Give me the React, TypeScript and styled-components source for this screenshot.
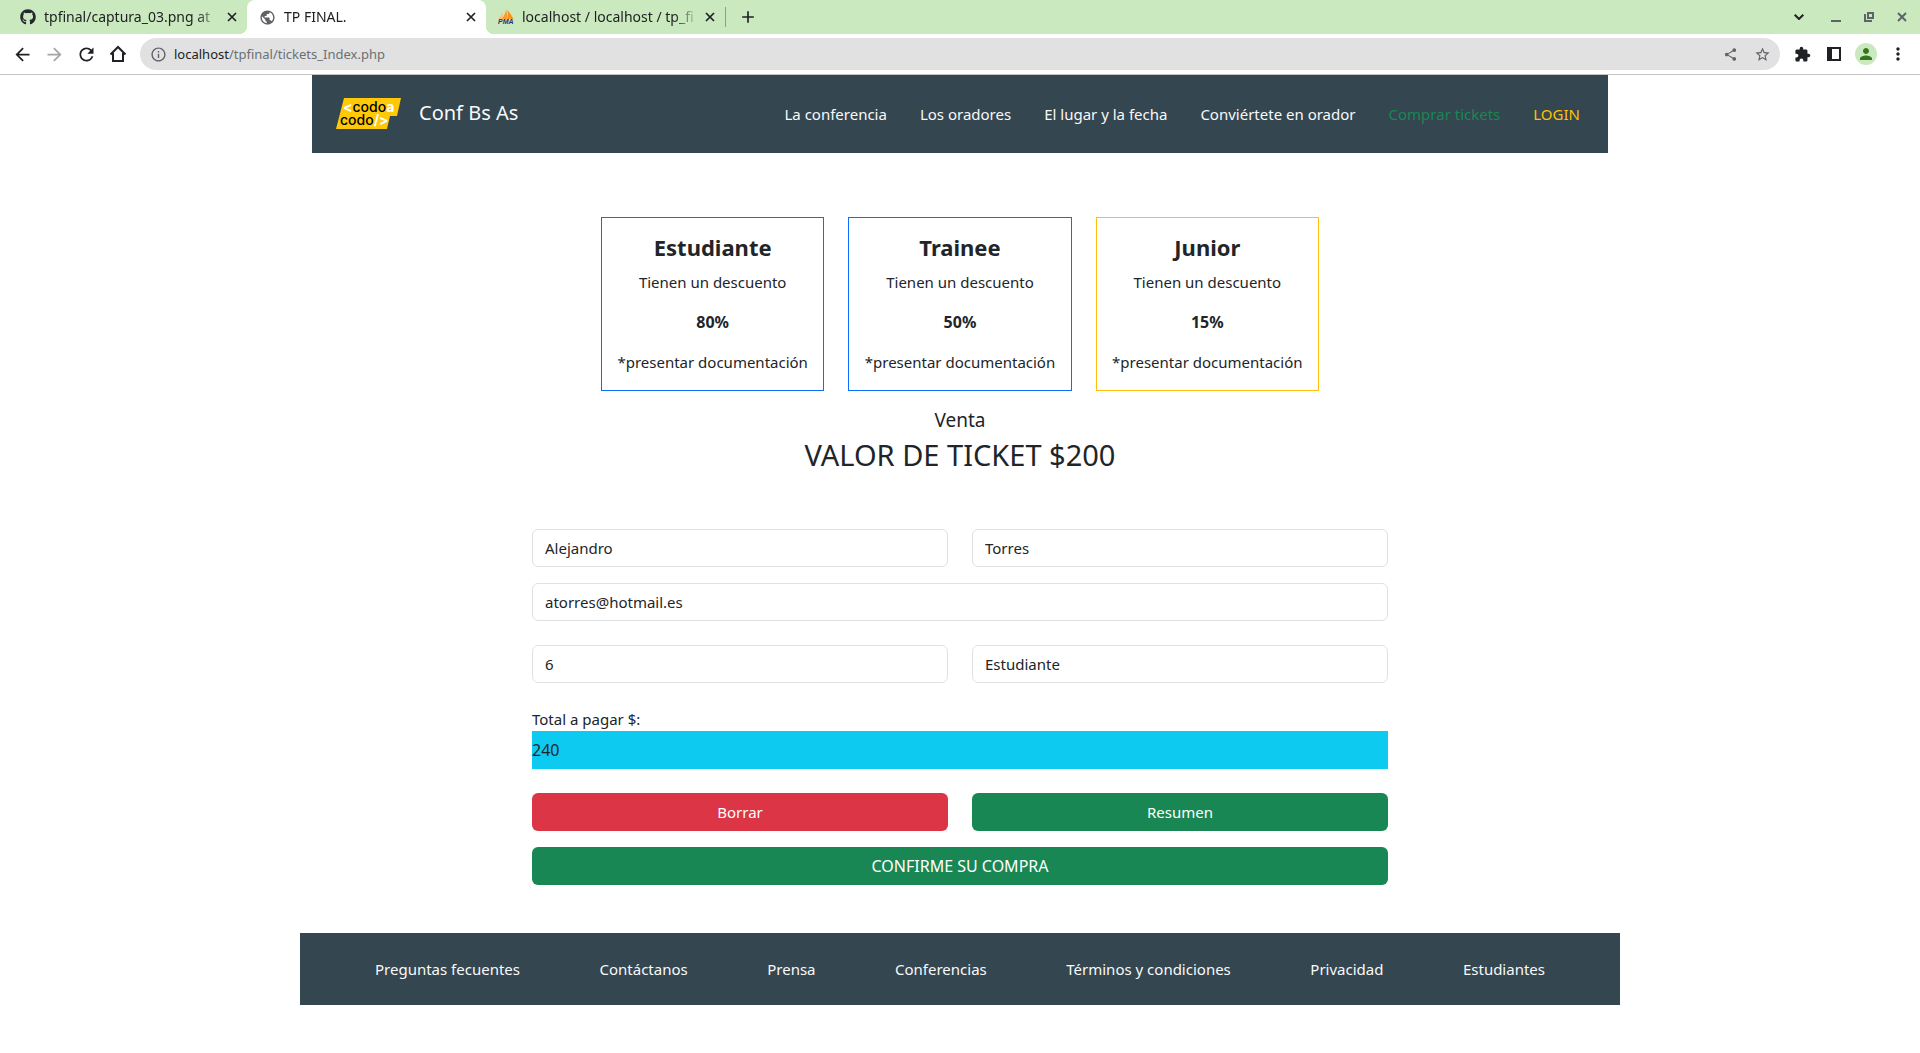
import React from "react";
import styled, { createGlobalStyle, css } from "styled-components";
import {
  MdArrowBack,
  MdArrowForward,
  MdRefresh,
  MdInfoOutline,
  MdShare,
  MdStarBorder,
  MdExtension,
  MdMoreVert,
  MdPublic,
  MdPerson,
  MdAdd,
} from "react-icons/md";
import { FaGithub } from "react-icons/fa";

const GlobalStyle = createGlobalStyle`
  *, *::before, *::after { box-sizing: border-box; }
  body {
    margin: 0;
    background: #fff;
    color: #212529;
    font: 400 15px/24px "Noto Sans", "Open Sans", sans-serif;
  }
  h1, h2, h3, p, ul { margin: 0; padding: 0; }
  ul { list-style: none; }
  button, input, select { font: inherit; color: inherit; margin: 0; }
  svg { display: block; flex: none; }
`;

/* ---------- Browser window ---------- */

const TabStrip = styled.div`
  display: flex;
  align-items: center;
  height: 34px;
  padding: 0 2px 0 8px;
  background: #cbe9bf;
`;

const Tab = styled.div<{ $active?: boolean }>`
  position: relative;
  display: flex;
  align-items: center;
  gap: 8px;
  width: 239px;
  height: 34px;
  padding: 0 7px 0 12px;
  font-size: 14px;
  line-height: 20px;
  color: #202124;
  ${(p) =>
    p.$active &&
    css`
      background: #fff;
      border-radius: 8px 8px 0 0;
      &::before,
      &::after {
        content: "";
        position: absolute;
        bottom: 0;
        width: 8px;
        height: 8px;
      }
      &::before {
        right: 100%;
        background: radial-gradient(circle at 0 0, transparent 8px, #fff 8px);
      }
      &::after {
        left: 100%;
        background: radial-gradient(circle at 100% 0, transparent 8px, #fff 8px);
      }
    `}
`;

const TabTitle = styled.span`
  flex: 1;
  min-width: 0;
  overflow: hidden;
  white-space: nowrap;
  mask-image: linear-gradient(to right, #000 calc(100% - 20px), rgba(0, 0, 0, 0.2));
`;

const PlainButton = styled.button`
  display: flex;
  align-items: center;
  justify-content: center;
  padding: 0;
  border: 0;
  background: none;
  cursor: pointer;
`;

const TabClose = styled(PlainButton)`
  width: 16px;
  height: 16px;
  color: #202124;
`;

const StripDivider = styled.span`
  width: 1px;
  height: 20px;
  background: #8ba383;
`;

const NewTab = styled(PlainButton)`
  width: 28px;
  height: 28px;
  margin-left: 8px;
  color: #202124;
`;

const WindowControls = styled.div`
  display: flex;
  margin-left: auto;
`;

const WindowButton = styled(PlainButton)<{ $dark?: boolean }>`
  width: ${(p) => (p.$dark ? 40 : 33)}px;
  height: 34px;
  color: ${(p) => (p.$dark ? "#202124" : "#5f6368")};
`;

const Toolbar = styled.div`
  display: flex;
  align-items: center;
  gap: 6px;
  height: 41px;
  padding: 0 6px;
  border-bottom: 1px solid #c4c4c4;
`;

const ToolGroup = styled.div`
  display: flex;
`;

const ToolButton = styled(PlainButton)<{ $tone?: string }>`
  width: 32px;
  height: 32px;
  color: ${(p) => p.$tone ?? "#202124"};
`;

const Omnibox = styled.div`
  display: flex;
  flex: 1;
  align-items: center;
  gap: 7px;
  height: 32px;
  padding: 0 2px 0 10px;
  border-radius: 16px;
  background: #e1e1e1;
  color: #5f6368;
`;

const Address = styled.div`
  flex: 1;
  font-size: 13px;
  line-height: 20px;
  color: #6d7073;
  & b {
    font-weight: 400;
    color: #202124;
  }
`;

const Avatar = styled.span`
  display: grid;
  place-items: center;
  width: 22px;
  height: 22px;
  border-radius: 50%;
  background: #cbe9bf;
  color: #37761d;
`;

/* ---------- Site ---------- */

const Container = styled.div`
  max-width: 1320px;
  margin: 0 auto;
`;

const NavBar = styled.nav`
  display: flex;
  align-items: center;
  justify-content: space-between;
  min-height: 78px;
  margin: 0 12px;
  padding: 0 28px 0 24px;
  background: #34464f;
`;

const Brand = styled.a`
  display: flex;
  align-items: center;
  gap: 18px;
  font-size: 20px;
  line-height: 30px;
  padding-bottom: 2px;
  color: #f8f9fa;
  text-decoration: none;
`;

const NavList = styled.ul`
  display: flex;
  gap: 33px;
`;

const SiteLink = styled.a<{ $color?: string }>`
  color: ${(p) => p.$color ?? "#f8f9fa"};
  text-decoration: none;
`;

const Cards = styled.section`
  display: grid;
  grid-template-columns: repeat(3, 1fr);
  gap: 24px;
  max-width: 718px;
  margin: 64px auto 0;
`;

const Card = styled.article<{ $border: string }>`
  display: flex;
  flex-direction: column;
  gap: 16px;
  padding: 15px 0 16px;
  border: 1px solid ${(p) => p.$border};
  text-align: center;
  white-space: nowrap;
`;

const CardTitle = styled.h2`
  margin-bottom: -8px;
  font-size: 22px;
  line-height: 29px;
  font-weight: 700;
`;

const CardValue = styled.strong`
  font-size: 16px;
`;

const Headings = styled.header`
  display: grid;
  gap: 4px;
  padding: 16px 0 56px;
  text-align: center;
`;

const Overline = styled.h3`
  font-size: 19px;
  line-height: 26px;
  font-weight: 400;
`;

const Price = styled.h1`
  font-size: 29px;
  line-height: 36px;
  font-weight: 400;
`;

const Form = styled.form`
  display: grid;
  gap: 24px;
  max-width: 856px;
  margin: 0 auto 48px;
`;

const FieldGroup = styled.div`
  display: grid;
  grid-template-columns: 1fr 1fr;
  gap: 16px 24px;
`;

const fieldStyle = css`
  width: 100%;
  height: 38px;
  padding: 6px 12px;
  border: 1px solid #dee2e6;
  border-radius: 6px;
  background: #fff;
  appearance: none;
  outline: none;
`;

const Field = styled.input<{ $wide?: boolean }>`
  ${fieldStyle}
  ${(p) => p.$wide && "grid-column: 1 / -1;"}
`;

const Choice = styled.select`
  ${fieldStyle}
`;

const TotalLabel = styled.label`
  display: block;
`;

const Total = styled.input`
  display: block;
  width: 100%;
  height: 38px;
  padding: 6px 0;
  border: 0;
  background: #0dcaf0;
  font-size: 16px;
  outline: none;
`;

const Action = styled.button<{ $tone: string; $wide?: boolean }>`
  height: 38px;
  padding: 6px 12px;
  border: 0;
  border-radius: 6px;
  background: ${(p) => p.$tone};
  color: #fff;
  cursor: pointer;
  ${(p) => p.$wide && "grid-column: 1 / -1; font-size: 16px;"}
`;

const Footer = styled.footer`
  padding: 24px 75px;
  background: #34464f;
`;

const FooterList = styled.ul`
  display: flex;
  justify-content: space-between;
`;

/* ---------- Drawings ---------- */

const HomeIcon = () => (
  <svg width="18" height="18" viewBox="0 0 18 18" fill="none" stroke="currentColor" strokeWidth="2">
    <path d="M1.5 9.5 9 2l7.5 7.5M4 8v8h10V8" />
  </svg>
);

const PmaIcon = () => (
  <svg width="16" height="16" viewBox="0 0 16 16">
    <path d="M0 10C2 8 4 5 4.500 2L5 10z" fill="#fbc27a" />
    <path d="M4 10C6 7 8 3 8 0l2 10z" fill="#f89c2c" />
    <path d="M9.500 1C12 4 14 7 15.500 10H10z" fill="#f7931e" />
    <text x="0" y="15" fontFamily="Liberation Sans" fontSize="7" fontWeight="700" fontStyle="italic" fill="#2b2f6b">
      PMA
    </text>
  </svg>
);

const PanelIcon = () => (
  <svg width="14" height="14" viewBox="0 0 14 14">
    <path fill="currentColor" fillRule="evenodd" d="M0 0h14v14H0zM5 2v10h7V2z" />
  </svg>
);

const ChevronIcon = () => (
  <svg width="10" height="6" viewBox="0 0 10 6" fill="none" stroke="currentColor" strokeWidth="2">
    <path d="M.7.7 5 5 9.300.7" />
  </svg>
);

const MinimizeIcon = () => (
  <svg width="10" height="10" viewBox="0 0 10 10">
    <path fill="currentColor" d="M0 8h10v2H0z" />
  </svg>
);

const RestoreIcon = () => (
  <svg width="10" height="10" viewBox="0 0 10 10">
    <path fill="currentColor" fillRule="evenodd" d="M3 0h7v7H3zM5 2v3h3V2zM0 2h2v6h6v2H0z" />
  </svg>
);

const CloseIcon = ({ size, weight }: { size: number; weight: number }) => (
  <svg width={size} height={size} viewBox="0 0 10 10" stroke="currentColor" strokeWidth={weight}>
    <path d="M1 1l8 8M9 1L1 9" />
  </svg>
);

const Logo = () => (
  <svg width="65" height="31" viewBox="0 0 65 31" role="img" aria-label="Codo a Codo">
    <path d="M8 0h57l-4 18h-7l-3 13H0z" fill="#ffc907" />
    <g fontFamily="Inter, sans-serif" fontSize="14" fontWeight="500" fill="#000">
      <text x="7" y="14">
        <tspan fill="#fff" fontWeight="700">&lt;</tspan>codo<tspan fill="#fff" fontWeight="700">a</tspan>
      </text>
      <text x="4" y="27">
        codo<tspan fill="#fff" fontWeight="700">/&gt;</tspan>
      </text>
    </g>
  </svg>
);

/* ---------- Content ---------- */

const tabs = [
  { title: "tpfinal/captura_03.png at", icon: <FaGithub size={16} color="#24292f" /> },
  { title: "TP FINAL.", icon: <MdPublic size={17} color="#5f6368" />, active: true },
  { title: "localhost / localhost / tp_fi", icon: <PmaIcon /> },
];

const navLinks = [
  { text: "La conferencia" },
  { text: "Los oradores" },
  { text: "El lugar y la fecha" },
  { text: "Conviértete en orador" },
  { text: "Comprar tickets", color: "#198754" },
  { text: "LOGIN", color: "#ffc107" },
];

const discounts = [
  { name: "Estudiante", value: "80%", border: "#0d6efd" },
  { name: "Trainee", value: "50%", border: "#0d6efd" },
  { name: "Junior", value: "15%", border: "#ffc107" },
];

const footerLinks = [
  "Preguntas fecuentes",
  "Contáctanos",
  "Prensa",
  "Conferencias",
  "Términos y condiciones",
  "Privacidad",
  "Estudiantes",
];

export default function App() {
  return (
    <>
      <GlobalStyle />
      <TabStrip>
        {tabs.map((tab) => (
          <Tab key={tab.title} $active={tab.active}>
            {tab.icon}
            <TabTitle>{tab.title}</TabTitle>
            <TabClose aria-label="Cerrar pestaña">
              <CloseIcon size={10} weight={1.7} />
            </TabClose>
          </Tab>
        ))}
        <StripDivider />
        <NewTab aria-label="Nueva pestaña">
          <MdAdd size={20} />
        </NewTab>
        <WindowControls>
          <WindowButton $dark aria-label="Buscar pestañas"><ChevronIcon /></WindowButton>
          <WindowButton aria-label="Minimizar"><MinimizeIcon /></WindowButton>
          <WindowButton aria-label="Restaurar"><RestoreIcon /></WindowButton>
          <WindowButton aria-label="Cerrar"><CloseIcon size={10} weight={2} /></WindowButton>
        </WindowControls>
      </TabStrip>
      <Toolbar>
        <ToolGroup>
          <ToolButton aria-label="Atrás"><MdArrowBack size={21} /></ToolButton>
          <ToolButton aria-label="Adelante" $tone="#a3a5a7"><MdArrowForward size={21} /></ToolButton>
          <ToolButton aria-label="Recargar"><MdRefresh size={21} /></ToolButton>
          <ToolButton aria-label="Inicio"><HomeIcon /></ToolButton>
        </ToolGroup>
        <Omnibox>
          <MdInfoOutline size={17} />
          <Address><b>localhost</b>/tpfinal/tickets_Index.php</Address>
          <ToolGroup>
            <ToolButton aria-label="Compartir" $tone="#5f6368"><MdShare size={15} /></ToolButton>
            <ToolButton aria-label="Favorito" $tone="#5f6368"><MdStarBorder size={17} /></ToolButton>
          </ToolGroup>
        </Omnibox>
        <ToolGroup>
          <ToolButton aria-label="Extensiones"><MdExtension size={17} /></ToolButton>
          <ToolButton aria-label="Panel lateral"><PanelIcon /></ToolButton>
          <ToolButton aria-label="Perfil"><Avatar><MdPerson size={18} /></Avatar></ToolButton>
          <ToolButton aria-label="Menú"><MdMoreVert size={20} /></ToolButton>
        </ToolGroup>
      </Toolbar>

      <Container>
        <NavBar>
          <Brand href="#">
            <Logo />
            Conf Bs As
          </Brand>
          <NavList>
            {navLinks.map((link) => (
              <li key={link.text}>
                <SiteLink href="#" $color={link.color}>{link.text}</SiteLink>
              </li>
            ))}
          </NavList>
        </NavBar>

        <main>
          <Cards>
            {discounts.map((d) => (
              <Card key={d.name} $border={d.border}>
                <CardTitle>{d.name}</CardTitle>
                <p>Tienen un descuento</p>
                <p><CardValue>{d.value}</CardValue></p>
                <p>*presentar documentación</p>
              </Card>
            ))}
          </Cards>
          <Headings>
            <Overline>Venta</Overline>
            <Price>VALOR DE TICKET $200</Price>
          </Headings>
          <Form onSubmit={(e) => e.preventDefault()}>
            <FieldGroup>
              <Field aria-label="Nombre" defaultValue="Alejandro" />
              <Field aria-label="Apellido" defaultValue="Torres" />
              <Field $wide type="email" aria-label="Correo" defaultValue="atorres@hotmail.es" />
            </FieldGroup>
            <FieldGroup>
              <Field aria-label="Cantidad" defaultValue="6" />
              <Choice aria-label="Categoría" defaultValue="Estudiante">
                {discounts.map((d) => (
                  <option key={d.name}>{d.name}</option>
                ))}
              </Choice>
            </FieldGroup>
            <div>
              <TotalLabel htmlFor="total">Total a pagar $:</TotalLabel>
              <Total id="total" readOnly value="240" />
            </div>
            <FieldGroup>
              <Action type="reset" $tone="#dc3545">Borrar</Action>
              <Action type="button" $tone="#198754">Resumen</Action>
              <Action type="submit" $wide $tone="#198754">CONFIRME SU COMPRA</Action>
            </FieldGroup>
          </Form>
        </main>

        <Footer>
          <FooterList>
            {footerLinks.map((text) => (
              <li key={text}>
                <SiteLink href="#">{text}</SiteLink>
              </li>
            ))}
          </FooterList>
        </Footer>
      </Container>
    </>
  );
}
